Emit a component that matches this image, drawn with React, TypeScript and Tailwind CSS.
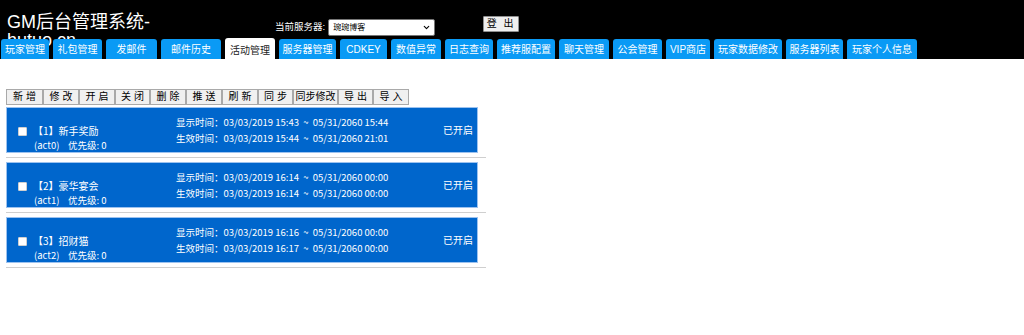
import { ChevronDown } from 'lucide-react';

const tabs = [
    { label: '玩家管理', w: 'w-[48px]' },
    { label: '礼包管理', w: 'w-[49px]' },
    { label: '发邮件', w: 'w-[51px]' },
    { label: '邮件历史', w: 'w-[60px]' },
    { label: '活动管理', w: 'w-[50px]', active: true },
    { label: '服务器管理', w: 'w-[57px]' },
    { label: 'CDKEY', w: 'w-[47px]' },
    { label: '数值异常', w: 'w-[50px]' },
    { label: '日志查询', w: 'w-[48px]' },
    { label: '推荐服配置', w: 'w-[58px]' },
    { label: '聊天管理', w: 'w-[50px]' },
    { label: '公会管理', w: 'w-[49px]' },
    { label: 'VIP商店', w: 'w-[44px]' },
    { label: '玩家数据修改', w: 'w-[68px]' },
    { label: '服务器列表', w: 'w-[57px]' },
    { label: '玩家个人信息', w: 'w-[70px]' },
];

const tools = [
    { label: '新增', w: 'w-[37px]' },
    { label: '修改', w: 'w-[36px]' },
    { label: '开启', w: 'w-[36px]' },
    { label: '关闭', w: 'w-[35px]' },
    { label: '删除', w: 'w-[36px]' },
    { label: '推送', w: 'w-[36px]' },
    { label: '刷新', w: 'w-[36px]' },
    { label: '同步', w: 'w-[35px]' },
    { label: '同步修改', w: 'w-[45px]', tight: true },
    { label: '导出', w: 'w-[35px]' },
    { label: '导入', w: 'w-[36px]' },
];

const activities = [
    {
        id: 1, name: '新手奖励', code: 'act0',
        show: '03/03/2019 15:43  ~  05/31/2060 15:44',
        live: '03/03/2019 15:44  ~  05/31/2060 21:01',
    },
    {
        id: 2, name: '豪华宴会', code: 'act1',
        show: '03/03/2019 16:14  ~  05/31/2060 00:00',
        live: '03/03/2019 16:14  ~  05/31/2060 00:00',
    },
    {
        id: 3, name: '招财猫', code: 'act2',
        show: '03/03/2019 16:16  ~  05/31/2060 00:00',
        live: '03/03/2019 16:17  ~  05/31/2060 00:00',
    },
];

export default function App() {
    return (
        <div className="w-[1024px] h-[335px] bg-white overflow-hidden font-['Liberation_Sans','Noto_Sans_CJK_SC',sans-serif]">
            {/* Header */}
            <div className="bg-black h-[59px]">
                <div className="flex items-start h-[38px]">
                    <div className="w-[275px] pl-[7px] pt-[13px] h-[38px]">
                        <div className="text-white text-[18px] leading-[18px] whitespace-nowrap">
                            GM后台管理系统-<br />hutuo.cn
                        </div>
                    </div>
                    <span className="mt-[20px] text-white text-[9.5px] leading-[14px]">当前服务器:</span>
                    <div className="mt-[19px] ml-[3px] w-[107px] h-[17px] bg-white border border-[#767676] rounded-[2px] flex items-center pl-[4px] pr-[3px]">
                        <span className="flex-1 text-[8px] leading-[10px] text-black">琬琬博客</span>
                        <ChevronDown size={9} strokeWidth={3} className="text-black" />
                    </div>
                    <button className="mt-[16px] ml-[48px] w-[36px] h-[16px] bg-[#efefef] border border-[#8f8f8f] rounded-[1px] text-[10px] leading-[14px] text-black tracking-[2px]">
                        登 出
                    </button>
                </div>
                <div className="relative z-10 flex items-end gap-[4px] pl-[1px] h-[21px]">
                    {tabs.map(t => (
                        <div
                            key={t.label}
                            className={
                                t.active
                                    ? `${t.w} h-[22px] -mb-[1px] bg-white text-[#222] rounded-t-[3px] flex items-center justify-center text-[10px] pt-[2px]`
                                    : `${t.w} h-[20px] bg-[#0a9af5] text-white rounded-t-[3px] flex items-center justify-center text-[10px]`
                            }
                        >
                            {t.label}
                        </div>
                    ))}
                </div>
            </div>

            {/* Body */}
            <div className="pt-[30px] pl-[6px]">
                <div className="flex">
                    {tools.map(b => (
                        <button
                            key={b.label}
                            className={`${b.w} h-[16px] bg-[#f0f0f0] border border-[#a9a9a9] text-[10px] leading-[14px] text-black ${b.tight ? 'tracking-[0px]' : 'tracking-[3px] pl-[3px]'}`}
                        >
                            {b.label}
                        </button>
                    ))}
                </div>

                <div className="mt-[2px] w-[480px]">
                    {activities.map(a => (
                        <div key={a.id}>
                            <div className="w-[472px] h-[46px] bg-[#0066cc] border border-[#9cc2ef] flex items-start text-white font-['Noto_Sans_CJK_SC','Liberation_Sans',sans-serif]">
                                <div className="w-[169px] pl-[11px] pt-[16px]">
                                    <div className="flex items-center h-[14px]">
                                        <span className="w-[9px] h-[9px] bg-white border border-[#cfcfcf] rounded-[1px]" />
                                        <span className="ml-[6px] text-[10px] leading-[14px]">【{a.id}】{a.name}</span>
                                    </div>
                                    <div className="pl-[16px] h-[14px] text-[9.5px] leading-[14px] whitespace-pre">
                                        ({a.code})    优先级: 0
                                    </div>
                                </div>
                                <div className="pt-[6px] text-[9.5px] leading-[16px] whitespace-pre">
                                    <div>显示时间：{a.show}</div>
                                    <div>生效时间：{a.live}</div>
                                </div>
                                <div className="ml-auto self-center pr-[4px] text-[10px] leading-[14px]">已开启</div>
                            </div>
                            <div className="mt-[4px] mb-[4px] h-[1px] bg-[#cfcfcf]" />
                        </div>
                    ))}
                </div>
            </div>
        </div>
    );
}
